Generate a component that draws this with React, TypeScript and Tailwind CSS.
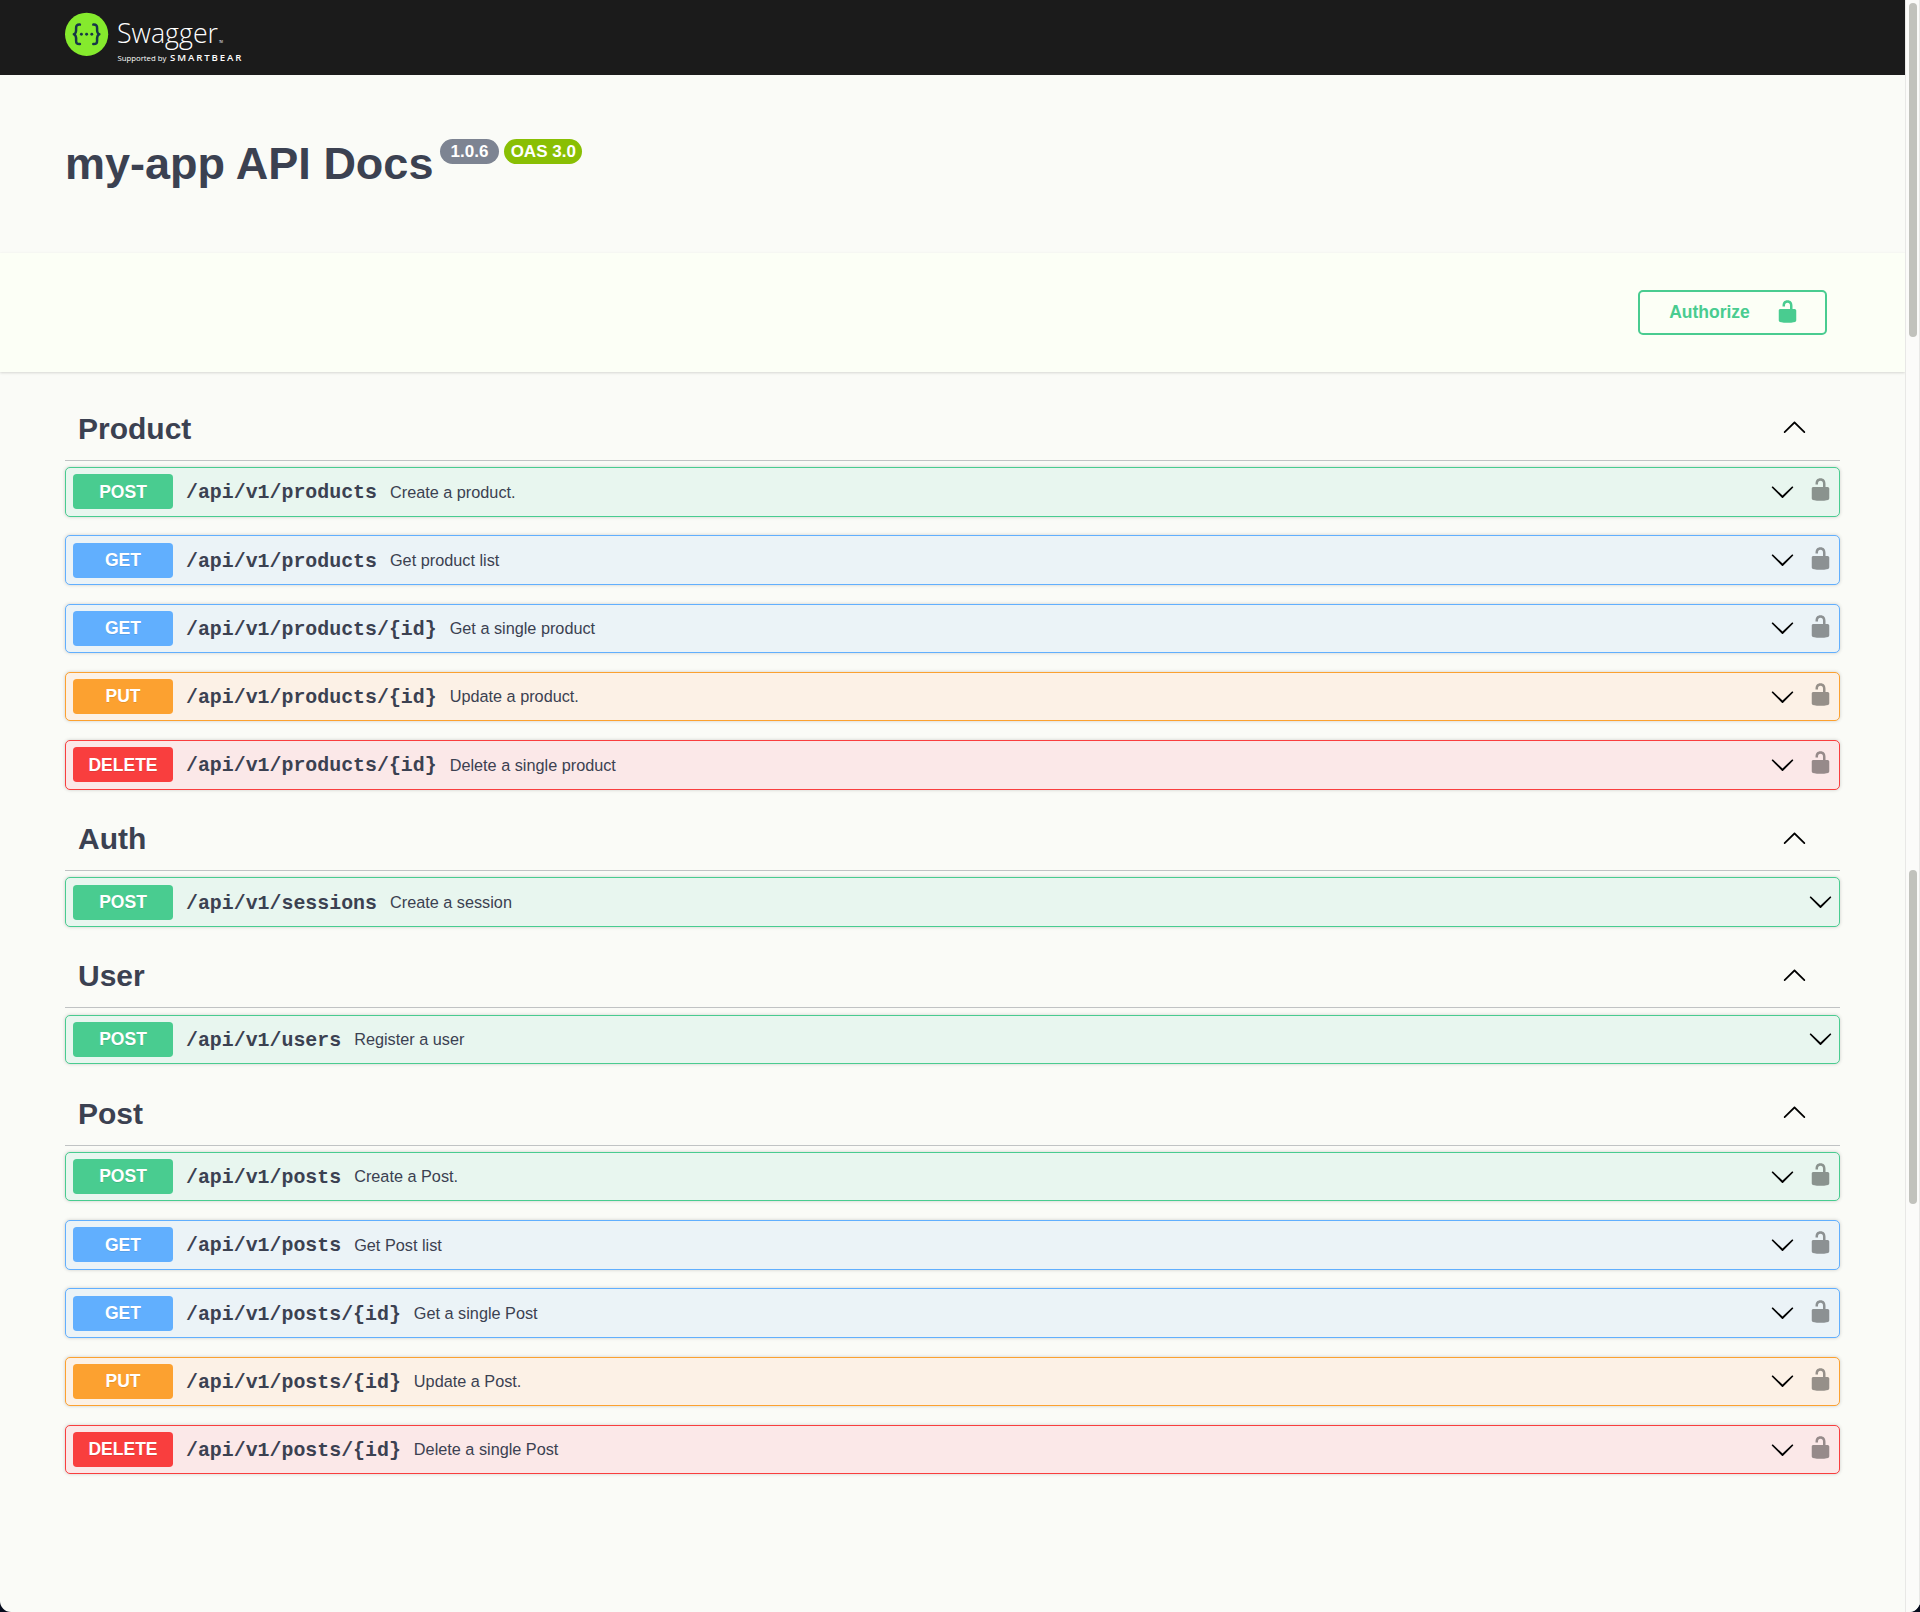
const CHEVRON_DOWN =
  'M17.418 6.109c.272-.268.709-.268.979 0s.271.701 0 .969l-7.908 7.83c-.27.268-.707.268-.979 0l-7.908-7.83c-.27-.268-.27-.701 0-.969.271-.268.709-.268.979 0L10 13.25l7.418-7.141z'
const CHEVRON_UP =
  'M17.418 14.908C17.69 15.176 18.127 15.176 18.397 14.908C18.667 14.64 18.668 14.207 18.397 13.939L10.489 6.109C10.219 5.841 9.782 5.841 9.51 6.109L1.602 13.939C1.332 14.207 1.332 14.64 1.602 14.908C1.873 15.176 2.311 15.176 2.581 14.908L10 7.767L17.418 14.908Z'
const UNLOCKED =
  'M15.8 8H14V5.6C14 2.703 12.665 1 10 1 7.334 1 6 2.703 6 5.6V6h2v-.801C8 3.754 8.797 3 10 3c1.203 0 2 .754 2 2.199V8H4c-.553 0-1 .646-1 1.199V17c0 .549.428 1.139.951 1.307l1.197.387C5.672 18.861 6.55 19 7.1 19h5.8c.549 0 1.428-.139 1.951-.307l1.196-.387c.524-.167.953-.757.953-1.306V9.199C17 8.646 16.352 8 15.8 8z'

type Method = 'POST' | 'GET' | 'PUT' | 'DELETE'
type Operation = { method: Method; path: string; summary: string; locked: boolean }

const sections: { name: string; operations: Operation[] }[] = [
  {
    name: 'Product',
    operations: [
      { method: 'POST', path: '/api/v1/products', summary: 'Create a product.', locked: true },
      { method: 'GET', path: '/api/v1/products', summary: 'Get product list', locked: true },
      { method: 'GET', path: '/api/v1/products/{id}', summary: 'Get a single product', locked: true },
      { method: 'PUT', path: '/api/v1/products/{id}', summary: 'Update a product.', locked: true },
      { method: 'DELETE', path: '/api/v1/products/{id}', summary: 'Delete a single product', locked: true },
    ],
  },
  { name: 'Auth', operations: [{ method: 'POST', path: '/api/v1/sessions', summary: 'Create a session', locked: false }] },
  { name: 'User', operations: [{ method: 'POST', path: '/api/v1/users', summary: 'Register a user', locked: false }] },
  {
    name: 'Post',
    operations: [
      { method: 'POST', path: '/api/v1/posts', summary: 'Create a Post.', locked: true },
      { method: 'GET', path: '/api/v1/posts', summary: 'Get Post list', locked: true },
      { method: 'GET', path: '/api/v1/posts/{id}', summary: 'Get a single Post', locked: true },
      { method: 'PUT', path: '/api/v1/posts/{id}', summary: 'Update a Post.', locked: true },
      { method: 'DELETE', path: '/api/v1/posts/{id}', summary: 'Delete a single Post', locked: true },
    ],
  },
]

const rowStyle: Record<Method, string> = {
  POST: 'border-[#49cc90] bg-[#e8f6ef]',
  GET: 'border-[#61affe] bg-[#ebf3f7]',
  PUT: 'border-[#fca130] bg-[#fcf1e6]',
  DELETE: 'border-[#f93e3e] bg-[#fbe8e8]',
}
const badgeStyle: Record<Method, string> = {
  POST: 'bg-[#49cc90]',
  GET: 'bg-[#61affe]',
  PUT: 'bg-[#fca130]',
  DELETE: 'bg-[#f93e3e]',
}

function Icon({ d, className = '' }: { d: string; className?: string }) {
  return (
    <svg viewBox="0 0 20 20" className={`size-[25px] shrink-0 ${className}`} fill="currentColor">
      <path d={d} />
    </svg>
  )
}

function Logo() {
  return (
    <svg width="180" height="56" viewBox="0 0 180 56" className="shrink-0">
      <circle cx="21.6" cy="22.3" r="21.6" fill="#85ea2d" />
      <g fill="none" stroke="#173647" strokeWidth="2.5" strokeLinecap="round" strokeLinejoin="round">
        <path d="M14.9 12.6c-2.9-.2-3.9.9-3.8 3.5 .2 3.6 .1 5.5-2.2 6.2 2.3 .7 2.4 2.6 2.2 6.2-.1 2.6 .9 3.7 3.8 3.5" />
        <path d="M28.3 12.6c2.9-.2 3.9.9 3.8 3.5-.2 3.6-.1 5.5 2.2 6.2-2.3 .7-2.4 2.6-2.2 6.2 .1 2.6-.9 3.7-3.8 3.5" />
      </g>
      <g fill="#173647">
        <circle cx="16.4" cy="22.3" r="1.45" />
        <circle cx="21.6" cy="22.3" r="1.45" />
        <circle cx="26.8" cy="22.3" r="1.45" />
      </g>
      <g fill="#fff" fontFamily="'Open Sans', sans-serif">
        <text x="52" y="31" fontSize="27.5" fontWeight="300" textLength="101" lengthAdjust="spacingAndGlyphs">Swagger</text>
        <text x="154" y="31" fontSize="3" textLength="4">TM</text>
        <text x="52.4" y="48.6" fontSize="7.6" textLength="49" lengthAdjust="spacingAndGlyphs">Supported by</text>
        <text x="105" y="48.6" fontSize="9.6" fontWeight="600" textLength="71.5" lengthAdjust="spacing">SMARTBEAR</text>
      </g>
    </svg>
  )
}

function OperationRow({ op }: { op: Operation }) {
  return (
    <div className={`mb-[18.75px] flex h-[49.5px] items-center rounded-[5px] border-[1.25px] pr-[6.5px] pl-[7px] shadow-[0_0_3.75px_rgba(0,0,0,0.19)] ${rowStyle[op.method]}`}>
      <span className={`flex h-[35px] w-[100px] shrink-0 items-center justify-center rounded-[3.75px] text-[17.5px] font-bold text-white [text-shadow:0_1px_0_rgba(0,0,0,0.1)] ${badgeStyle[op.method]}`}>
        {op.method}
      </span>
      <span className="ml-[13px] pt-[3px] font-['Liberation_Mono',monospace] text-[19.9px] font-bold">{op.path}</span>
      <span className="ml-[13px] text-[16.25px]">{op.summary}</span>
      <Icon d={CHEVRON_DOWN} className="-mt-px ml-auto text-black" />
      {op.locked && <Icon d={UNLOCKED} className="-mt-1 ml-[12.5px] text-black opacity-40" />}
    </div>
  )
}

export default function App() {
  return (
    <div className="h-[1612px] w-[1920px] overflow-hidden bg-[#060b1c]">
      <div className="flex h-full overflow-hidden rounded-b-[11px] bg-[#fafbf7] font-['Liberation_Sans',Arial,sans-serif] text-[#3b4151]">
        <div className="w-[1905px] shrink-0">
          <header className="flex h-[75px] bg-[#1b1b1b] pt-[12px] pl-[65px]">
            <Logo />
          </header>

          <div className="flex h-[178px] items-start pl-[65px]">
            <h1 className="mt-[63px] w-[369px] text-[45px] leading-[52px] font-bold whitespace-nowrap">my-app API Docs</h1>
            <div className="mt-[64px] ml-[6px] flex gap-[5px] text-[17px] font-bold text-white">
              <span className="flex h-[25px] w-[59px] items-center justify-center rounded-full bg-[#7d8492]">1.0.6</span>
              <span className="flex h-[25px] w-[77.5px] items-center justify-center rounded-full bg-[#89bf04] pl-px whitespace-nowrap">OAS 3.0</span>
            </div>
          </div>

          <div className="flex h-[119px] items-start justify-end bg-[#fcfff6] pt-[37px] pr-[78px] shadow-[0_1.25px_2.5px_rgba(0,0,0,0.15)]">
            <button className="flex h-[45px] w-[189px] items-center rounded-[5px] border-[2.5px] border-[#49cc90] pl-[29px] text-[17.5px] font-bold text-[#49cc90]">
              <span className="w-[81px] pb-px">Authorize</span>
              <Icon d={UNLOCKED} className="-mt-[3px] ml-[25px]" />
            </button>
          </div>

          <main className="px-[65px] pt-[26px]">
            {sections.map((section) => (
              <section key={section.name}>
                <h2 className="mb-[6.25px] flex h-[62.75px] items-center border-b-[1.25px] border-[#3b4151]/30 pr-[33px] pb-px pl-[13px] text-[30px] font-bold">
                  {section.name}
                  <Icon d={CHEVRON_UP} className="-mt-[3px] ml-auto text-black" />
                </h2>
                {section.operations.map((op) => (
                  <OperationRow key={op.method + op.path} op={op} />
                ))}
              </section>
            ))}
          </main>
        </div>

        <div className="relative flex-1 border-x border-[#e8e8e6] bg-[#fbfbf9]">
          <div className="absolute top-[3px] left-[3px] h-[334px] w-2 rounded-full bg-[#c1c2bc]" />
          <div className="absolute top-[870px] left-[3px] h-[334px] w-2 rounded-full bg-[#c1c2bc]" />
        </div>
      </div>
    </div>
  )
}
